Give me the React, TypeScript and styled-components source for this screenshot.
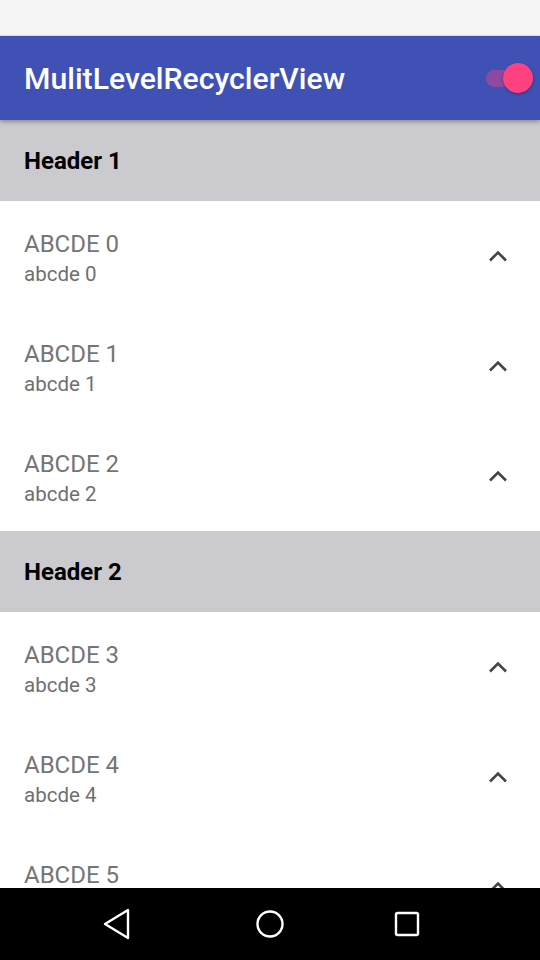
import React from "react";
import styled, { createGlobalStyle } from "styled-components";

const Global = createGlobalStyle`
  html, body { margin: 0; padding: 0; background: #fafafa; }
  body { font-family: Roboto, "Noto Sans", sans-serif; }
  * { box-sizing: border-box; }
`;

const Screen = styled.div`
  width: 540px;
  height: 960px;
  display: flex;
  flex-direction: column;
  overflow: hidden;
  background: #ffffff;
`;

const StatusBar = styled.div`
  height: 36px;
  flex: none;
  background: #f5f5f5;
  border-bottom: 1px solid #e4e4e6;
`;

const Toolbar = styled.div`
  height: 84px;
  flex: none;
  background: #3f51b5;
  display: flex;
  align-items: center;
  justify-content: space-between;
  padding: 0 6px 0 24px;
  position: relative;
  z-index: 2;
  box-shadow: 0 2px 4px rgba(0, 0, 0, 0.3);
`;

const Title = styled.div`
  color: #ffffff;
  font-size: 30.2px;
  font-weight: 500;
`;

const SwitchWrap = styled.div`
  position: relative;
  width: 50px;
  height: 34px;
  display: flex;
  align-items: center;
`;

const Track = styled.div`
  position: absolute;
  left: 2px;
  top: 9px;
  width: 38px;
  height: 17px;
  border-radius: 9px;
  background: #8e4aa3;
`;

const Thumb = styled.div`
  position: absolute;
  left: 19px;
  top: 2px;
  width: 30px;
  height: 30px;
  border-radius: 50%;
  background: #ff4081;
  box-shadow: 0 1px 3px rgba(0, 0, 0, 0.35);
`;

const List = styled.div`
  flex: 1;
  overflow: hidden;
  display: flex;
  flex-direction: column;
`;

const Header = styled.div`
  height: 81px;
  flex: none;
  background: #cbcacf;
  display: flex;
  align-items: center;
  padding-left: 24px;
  font-size: 24px;
  font-weight: 700;
  color: #000;
`;

const Row = styled.div`
  height: 110px;
  flex: none;
  display: flex;
  align-items: center;
  justify-content: space-between;
  padding: 0 30px 0 24px;
  background: #fff;
`;

const Texts = styled.div`
  display: flex;
  flex-direction: column;
  margin-top: 6px;
`;

const Primary = styled.div`
  font-size: 24px;
  color: #757575;
  line-height: 30px;
`;

const Secondary = styled.div`
  font-size: 20.5px;
  color: #6f6f6f;
  line-height: 30px;
`;

const Chevron = styled.svg`
  width: 24px;
  height: 24px;
  margin-top: 2px;
`;

const NavBar = styled.div`
  height: 72px;
  flex: none;
  background: #000;
  display: flex;
  align-items: center;
  padding-left: 101px;
`;

const NavIcon = styled.svg<{ $gap?: number }>`
  width: 32px;
  height: 32px;
  margin-left: ${(p) => p.$gap ?? 0}px;
`;

const ChevronUp = () => (
  <Chevron viewBox="0 0 24 24">
    <path d="M4 15.5 L12 7.5 L20 15.5" fill="none" stroke="#444" strokeWidth="2.6" />
  </Chevron>
);

const groups: { title: string; items: number[] }[] = [
  { title: "Header 1", items: [0, 1, 2] },
  { title: "Header 2", items: [3, 4, 5] },
];

export default function App() {
  return (
    <Screen>
      <Global />
      <StatusBar />
      <Toolbar>
        <Title>MulitLevelRecyclerView</Title>
        <SwitchWrap>
          <Track />
          <Thumb />
        </SwitchWrap>
      </Toolbar>
      <List>
        {groups.map((g) => (
          <React.Fragment key={g.title}>
            <Header>{g.title}</Header>
            {g.items.map((n) => (
              <Row key={n}>
                <Texts>
                  <Primary>ABCDE {n}</Primary>
                  <Secondary>abcde {n}</Secondary>
                </Texts>
                <ChevronUp />
              </Row>
            ))}
          </React.Fragment>
        ))}
      </List>
      <NavBar>
        <NavIcon viewBox="0 0 32 32">
          <path d="M27 2 L27 30 L4 16 Z" fill="none" stroke="#fff" strokeWidth="2.4" strokeLinejoin="round" />
        </NavIcon>
        <NavIcon viewBox="0 0 32 32" $gap={121}>
          <circle cx="16" cy="16" r="12.5" fill="none" stroke="#fff" strokeWidth="2.4" />
        </NavIcon>
        <NavIcon viewBox="0 0 32 32" $gap={105}>
          <rect x="5" y="5" width="22" height="22" rx="1.5" fill="none" stroke="#fff" strokeWidth="2.4" />
        </NavIcon>
      </NavBar>
    </Screen>
  );
}
